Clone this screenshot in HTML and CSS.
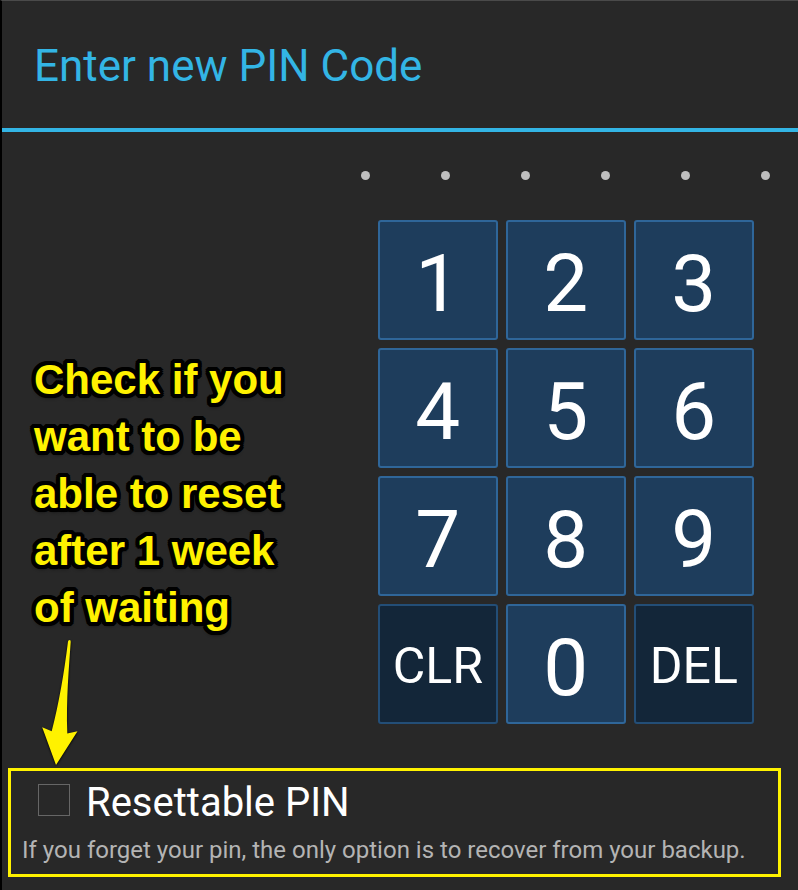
FILE: index.html
```
<!DOCTYPE html>
<html lang="en">
<head>
<meta charset="utf-8">
<meta name="viewport" content="width=device-width, initial-scale=1">
<title>Enter new PIN Code</title>
<link rel="stylesheet" href="styles.css">
</head>
<body>
<main class="dialog">
  <header class="dialog-header">
    <h1 class="dialog-title">Enter new PIN Code</h1>
  </header>
  <div class="dialog-body">
    <aside class="note">
      <p class="note-text">Check if you want to be able to reset after 1 week of waiting</p>
      <svg class="note-arrow" width="40" height="125" viewBox="0 0 40 125" aria-hidden="true">
        <path d="M28 1.5Q28.200 0 29.500 0Q31 0 30.700 2C29 27 26 60 27.300 93.500L37.500 91.200L16 125L2.200 87.200L11.700 91.300C19 63 24 34 28 1.500Z"/>
      </svg>
    </aside>
    <section class="entry">
      <div class="dots">
        <span class="dot"></span><span class="dot"></span><span class="dot"></span>
        <span class="dot"></span><span class="dot"></span><span class="dot"></span>
      </div>
      <div class="keypad">
        <button class="key" type="button">1</button>
        <button class="key" type="button">2</button>
        <button class="key" type="button">3</button>
        <button class="key" type="button">4</button>
        <button class="key" type="button">5</button>
        <button class="key" type="button">6</button>
        <button class="key" type="button">7</button>
        <button class="key" type="button">8</button>
        <button class="key" type="button">9</button>
        <button class="key key-action" type="button">CLR</button>
        <button class="key" type="button">0</button>
        <button class="key key-action" type="button">DEL</button>
      </div>
    </section>
  </div>
  <section class="option">
    <div class="option-row">
      <input class="option-box" type="checkbox" id="resettable">
      <label class="option-label" for="resettable">Resettable PIN</label>
    </div>
    <p class="option-hint">If you forget your pin, the only option is to recover from your backup.</p>
  </section>
</main>
</body>
</html>
```
FILE: styles.css
```
* {
  box-sizing: border-box;
}

body {
  margin: 0;
  background: #282828;
  color: #fff;
  font-family: Roboto, sans-serif;
}

.dialog {
  min-height: 100vh;
  border-top: 1px solid #4a4a4a;
  border-left: 2px solid #000;
}

.dialog-header {
  padding: 38px 32px 35px;
  border-bottom: 4px solid #33b5e5;
}

.dialog-title {
  margin: 0;
  color: #33b5e5;
  font-size: 44px;
  font-weight: 400;
  line-height: 54px;
}

.dialog-body {
  display: grid;
  grid-template-columns: 5fr 7fr;
}

.note {
  display: flex;
  flex-direction: column;
  justify-content: flex-end;
  padding: 0 30px 3px 32px;
}

.note-text {
  margin: 0 0 4px;
  color: #fff200;
  font: bold 42px/57px "Liberation Sans", Arial, sans-serif;
  text-shadow:
    4px 0 #000, 4px 2px #000, 3px 3px #000, 2px 4px #000,
    0 4px #000, -2px 4px #000, -3px 3px #000, -4px 2px #000,
    -4px 0 #000, -4px -2px #000, -3px -3px #000, -2px -4px #000,
    0 -4px #000, 2px -4px #000, 3px -3px #000, 4px -2px #000,
    2px 0 #000, -2px 0 #000, 0 2px #000, 0 -2px #000,
    0 3px 4px #000;
}

.note-arrow {
  display: block;
  margin-left: 6px;
  fill: #fff200;
  filter: drop-shadow(0 1px 1px #000);
}

.entry {
  display: flex;
  flex-direction: column;
  align-items: center;
  gap: 40px;
  padding: 39px 0 44px;
}

.dots {
  display: flex;
  gap: 71px;
}

.dot {
  width: 9px;
  height: 9px;
  border-radius: 50%;
  background: #bebebe;
}

.keypad {
  display: grid;
  grid-template-columns: repeat(3, 120px);
  grid-auto-rows: 120px;
  gap: 8px;
}

.key {
  padding: 8px 0 0;
  border: 2px solid #2f6699;
  border-radius: 3px;
  background: #1e3d5c;
  color: #fff;
  font: 80px/94px Roboto, sans-serif;
}

.key-action {
  padding-top: 4px;
  border-color: #234e77;
  background: #132639;
  font-size: 50px;
}

.option {
  margin: 0 17px 0 6px;
  padding: 8px 11px;
  border: 3px solid #fff200;
}

.option-row {
  display: flex;
  align-items: flex-start;
  gap: 16px;
  margin-left: 16px;
}

.option-box {
  appearance: none;
  flex: none;
  width: 32px;
  height: 32px;
  margin: 5px 0 0;
  border: 1px solid #666;
}

.option-box:checked {
  background: #33b5e5;
}

.option-label {
  font-size: 40px;
  line-height: 48px;
}

.option-hint {
  margin: 7px 0 0;
  color: #b4b4b4;
  font-size: 24px;
  line-height: 32px;
}
```
